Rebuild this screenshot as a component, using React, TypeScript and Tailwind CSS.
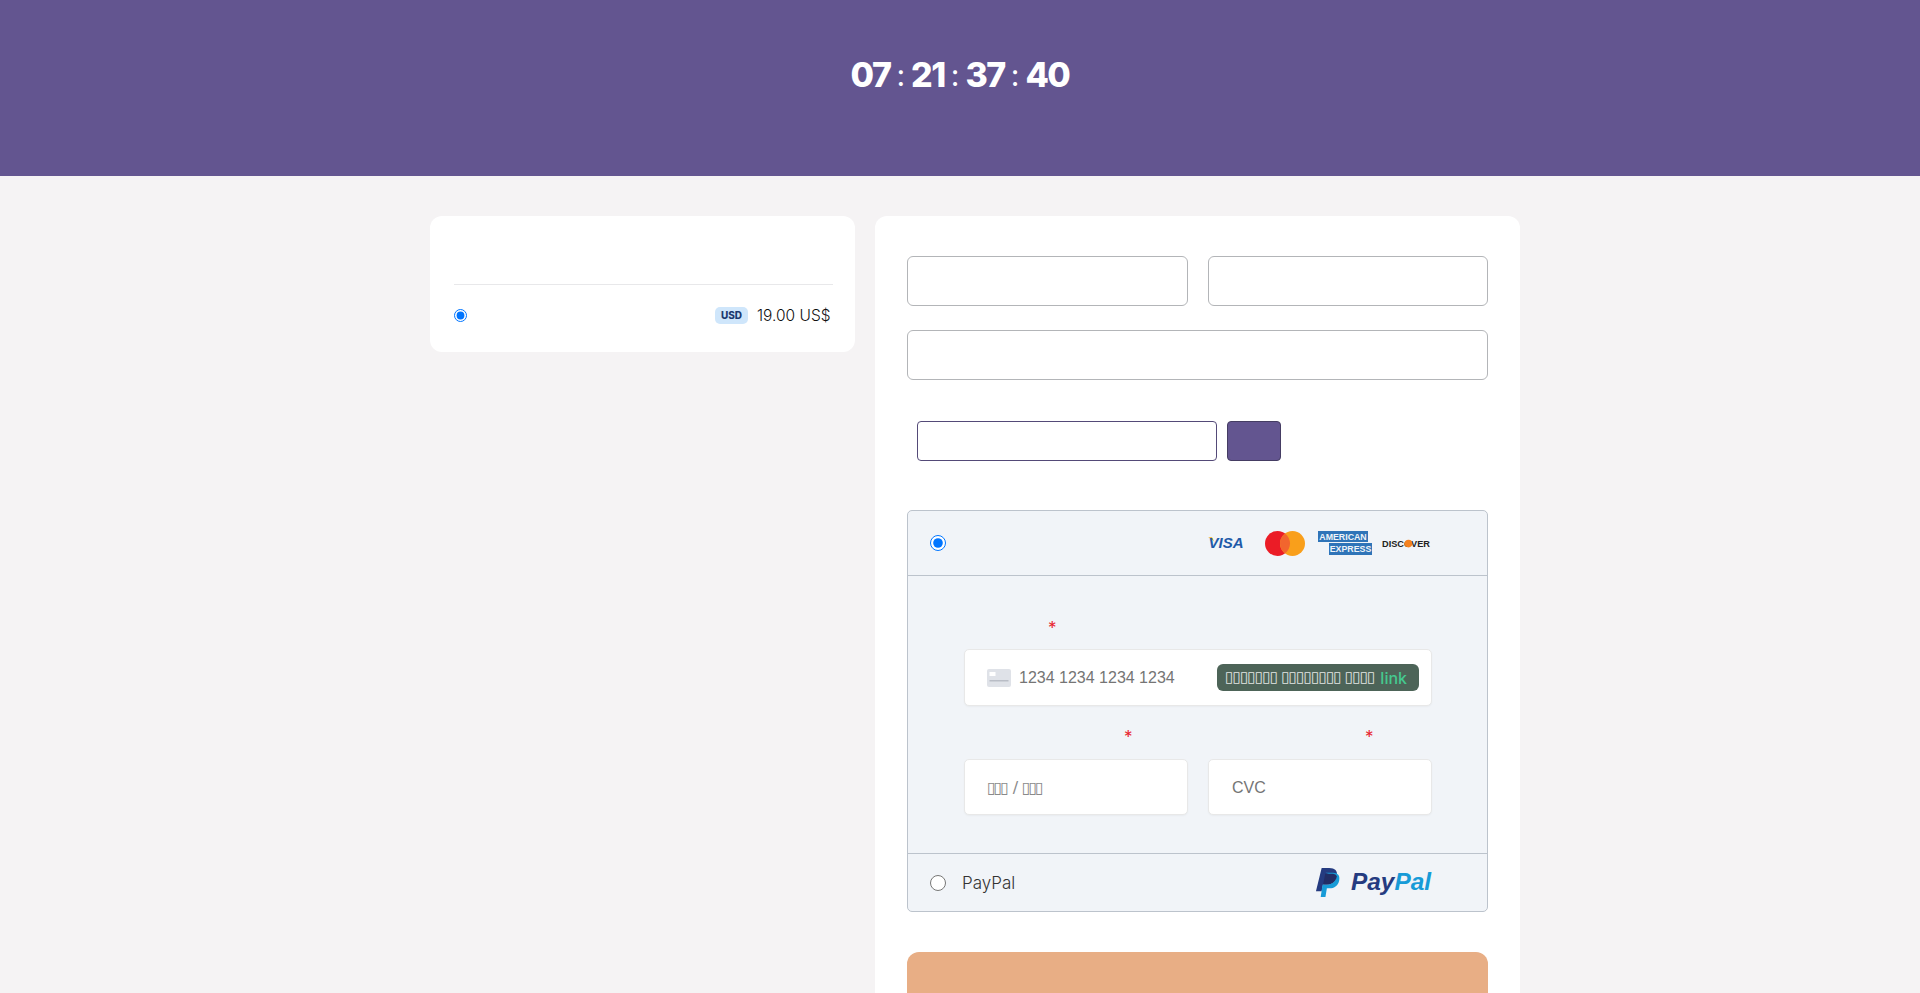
import React from "react";

const poppins = { fontFamily: "Inter, 'Noto Sans', sans-serif" };
const arial = { fontFamily: "'Liberation Sans', sans-serif" };
const dejavu = { fontFamily: "'DejaVu Sans', sans-serif" };

const timeParts = ["07", "21", "37", "40"];

function VisaLogo() {
  return (
    <svg width="36" height="18" viewBox="0 0 36 18">
      <path d="M0 3.2 L4 3.2 L6.5 8 C5 5.8 2.5 4 0 3.2Z" fill="#f2ae14" />
      <text x="35.5" y="13.5" textAnchor="end" fontFamily="'Liberation Sans', sans-serif" fontSize="15" fontWeight="700" fontStyle="italic" fill="#1f5aa8">
        VISA
      </text>
    </svg>
  );
}

function MastercardLogo() {
  return (
    <svg width="40" height="25" viewBox="0 0 40 25">
      <circle cx="12.5" cy="12.5" r="12.5" fill="#eb1c26" />
      <circle cx="27.5" cy="12.5" r="12.5" fill="#f99f1b" />
      <path d="M20 2.5 A12.5 12.5 0 0 1 20 22.5 A12.5 12.5 0 0 1 20 2.5Z" fill="#f2652e" />
    </svg>
  );
}

function AmexLogo() {
  return (
    <svg width="54" height="28" viewBox="0 0 54 28">
      <rect x="0" y="2" width="50" height="11" fill="#2f74b8" />
      <rect x="11" y="14" width="43" height="12" fill="#2f74b8" />
      <text x="25" y="11.2" textAnchor="middle" fontFamily="'Liberation Sans', sans-serif" fontSize="8.8" fontWeight="700" fill="#eef3f9">
        AMERICAN
      </text>
      <text x="32.5" y="23.4" textAnchor="middle" fontFamily="'Liberation Sans', sans-serif" fontSize="8.8" fontWeight="700" fill="#eef3f9">
        EXPRESS
      </text>
    </svg>
  );
}

function DiscoverLogo() {
  return (
    <svg width="54" height="16" viewBox="0 0 54 16">
      <text x="0" y="12" fontFamily="'Liberation Sans', sans-serif" fontSize="9.2" fontWeight="700" fill="#222">
        DISCOVER
      </text>
      <circle cx="26.5" cy="8.6" r="3.8" fill="#f58220" />
    </svg>
  );
}

function PayPalLogo() {
  return (
    <svg width="118" height="32" viewBox="0 0 118 32">
      <g transform="translate(0 1) scale(0.95 0.97)">
        <path d="M7 0 H15 C21 0 24 3 23 8 C22 14 18 17 12 17 H8.5 L7 24 H1 Z" fill="#253b80" />
        <path d="M11 5 H19 C24 5 26.5 8 25.5 12.5 C24.5 18 20.5 21 15 21 H12.5 L11 30 H6 L8 17 H12 C18 17 21.5 14 22.5 9 Z" fill="#179bd7" />
        <path d="M8.5 17 L10.8 6 H19 C21.5 6.5 22.8 7.5 23 9 C21.5 14 18 17 12 17Z" fill="#222d65" />
      </g>
      <text x="36" y="23" fontFamily="'Liberation Sans', sans-serif" fontSize="24.4" fontWeight="700" fontStyle="italic" fill="#253b80">
        Pay
        <tspan fill="#179bd7">Pal</tspan>
      </text>
    </svg>
  );
}

function CardIcon() {
  return (
    <svg width="24" height="18" viewBox="0 0 24 18">
      <rect width="24" height="18" rx="2" fill="#dfe2e8" />
      <rect x="2.5" y="3" width="6" height="4" fill="#fff" />
      <rect x="2.5" y="11" width="19" height="1.5" fill="#b9bdc6" />
    </svg>
  );
}

function Star({ className }: { className: string }) {
  return <div className={`h-6 flex items-center pt-[5px] text-[17px] text-[#e8232f] ${className}`}>*</div>;
}

export default function App() {
  return (
    <div className="h-[993px] overflow-hidden bg-[#f5f3f4]" style={poppins}>
      <header className="h-[176px] bg-[#635590] flex justify-center items-start gap-[6px] pt-[52px] text-white">
        {timeParts.map((part, i) => (
          <React.Fragment key={part}>
            {i > 0 && <span className="text-[30px] leading-[46px] font-normal">:</span>}
            <span className="text-[34px] leading-[46px] font-extrabold tracking-[-1.5px]">{part}</span>
          </React.Fragment>
        ))}
      </header>

      <main className="flex items-start gap-5 pl-[430px] pt-10">
        {/* Left - plan */}
        <div className="w-[425px] h-[136px] bg-white rounded-xl pl-6 pr-[22px] pt-[68px]">
          <div className="border-t border-[#e8e8ea] flex items-center justify-between h-[62px] pr-[3px]">
            <input type="radio" name="plan" defaultChecked className="w-[13px] h-[13px]" />
            <div className="flex items-center gap-[9px]">
              <span className="bg-[#cfe6fb] text-[#1c3a70] text-[10px] font-extrabold rounded-[5px] h-[17px] w-[33px] flex items-center justify-center">
                USD
              </span>
              <span className="text-[15.5px] font-light text-[#111] w-[73px] whitespace-nowrap">19.00 US$</span>
            </div>
          </div>
        </div>

        {/* Right - form */}
        <div className="w-[645px] h-[900px] bg-white rounded-xl px-8 pt-10">
          <div className="grid grid-cols-2 gap-5">
            <input className="h-[50px] border border-[#b3b5b8] rounded-md" />
            <input className="h-[50px] border border-[#b3b5b8] rounded-md" />
          </div>
          <input className="block w-full mt-6 h-[50px] border border-[#b3b5b8] rounded-md" />

          <div className="flex gap-2.5 mt-[41px] pl-2.5">
            <input className="w-[300px] h-[40px] border border-[#544a78] rounded-[4px]" />
            <button className="w-[54px] h-[40px] bg-[#635590] border border-[#453d63] rounded-[4px]" />
          </div>

          <div className="mt-[49px] border border-[#bcc3cc] rounded-[5px] bg-[#f1f4f8]">
            <div className="h-[65px] flex items-center border-b border-[#bcc3cc] pl-[22px]">
              <input type="radio" name="pay" defaultChecked className="w-4 h-4" />
              <div className="flex items-center ml-[262px]">
                <VisaLogo />
                <div className="ml-[21px] flex"><MastercardLogo /></div>
                <div className="ml-[13px] flex"><AmexLogo /></div>
                <div className="ml-[10px] flex"><DiscoverLogo /></div>
              </div>
            </div>

            <div className="h-[277px] pl-14 pr-[55px] pt-[38px]">
              <Star className="pl-[84px]" />
              <div className="mt-[11px] h-[57px] bg-white border border-[#e8e8e8] rounded-[5px] shadow-[0_1px_2px_rgba(0,0,0,0.04)] flex items-center pl-[22px] pr-[12px]">
                <CardIcon />
                <input
                  placeholder="1234 1234 1234 1234"
                  className="ml-2 w-[170px] text-[16px] placeholder:text-[#757575]"
                  style={arial}
                />
                <div className="ml-auto w-[202px] h-[27px] rounded-md bg-[#4d6458] flex items-center justify-between pl-2 pr-3 text-[#e4e7e5] whitespace-nowrap">
                  <span className="text-[15px] tracking-[-0.8px]" style={dejavu}>▯▯▯▯▯▯▯ ▯▯▯▯▯▯▯▯ ▯▯▯▯</span>
                  <span className="text-[16px] font-medium text-[#45c98f]">link</span>
                </div>
              </div>

              <div className="grid grid-cols-2 gap-5 mt-[17px]">
                <div>
                  <Star className="pl-[160px]" />
                  <input
                    placeholder="▯▯▯ / ▯▯▯"
                    className="mt-3 block w-full h-[56px] bg-white border border-[#e8e8e8] rounded-[5px] shadow-[0_1px_2px_rgba(0,0,0,0.04)] pl-[22px] text-[16px] tracking-[-2.2px] [word-spacing:3px] placeholder:text-[#8a8a8a]"
                    style={dejavu}
                  />
                </div>
                <div>
                  <Star className="pl-[157px]" />
                  <input
                    placeholder="CVC"
                    className="mt-3 block w-full h-[56px] bg-white border border-[#e8e8e8] rounded-[5px] shadow-[0_1px_2px_rgba(0,0,0,0.04)] pl-[23px] pt-[2px] text-[16px] placeholder:text-[#757575]"
                    style={arial}
                  />
                </div>
              </div>
            </div>

            <div className="h-[58px] flex items-center border-t border-[#bcc3cc] pl-[22px] pr-[54px]">
              <input type="radio" name="pay" className="w-4 h-4" />
              <span className="ml-4 mt-[2px] text-[17px] font-light text-[#333]">PayPal</span>
              <div className="ml-auto flex"><PayPalLogo /></div>
            </div>
          </div>

          <button className="block w-full h-[70px] mt-10 bg-[#e8ae85] rounded-xl" />
        </div>
      </main>
    </div>
  );
}
